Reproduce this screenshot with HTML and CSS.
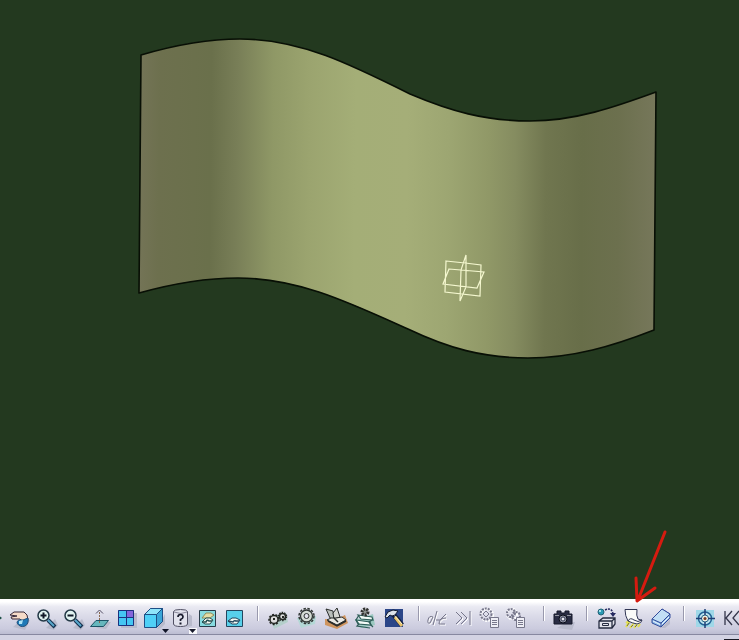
FILE: index.html
```
<!DOCTYPE html>
<html lang="en">
<head>
<meta charset="utf-8">
<meta name="viewport" content="width=device-width, initial-scale=1">
<title>Surface view</title>
<link rel="stylesheet" href="styles.css">
</head>
<body>
<main class="view">
  <svg class="scene" viewBox="0 0 739 599" preserveAspectRatio="xMidYMax meet" role="img" aria-label="Curved surface with reference planes">
    <defs>
      <linearGradient id="shade" gradientUnits="userSpaceOnUse" x1="140" y1="0" x2="656" y2="5">
        <stop offset="0" stop-color="#747457"/>
        <stop offset=".04" stop-color="#6d704e"/>
        <stop offset=".14" stop-color="#6a704b"/>
        <stop offset=".19" stop-color="#787e57"/>
        <stop offset=".26" stop-color="#8f9866"/>
        <stop offset=".33" stop-color="#9ba46f"/>
        <stop offset=".42" stop-color="#a4ae77"/>
        <stop offset=".52" stop-color="#a5ae78"/>
        <stop offset=".6" stop-color="#9da672"/>
        <stop offset=".68" stop-color="#909867"/>
        <stop offset=".73" stop-color="#858c60"/>
        <stop offset=".79" stop-color="#70764f"/>
        <stop offset=".86" stop-color="#686e49"/>
        <stop offset=".93" stop-color="#6c704e"/>
        <stop offset="1" stop-color="#76775a"/>
      </linearGradient>
    </defs>
    <path class="surface" fill="url(#shade)" d="M141 55C175 45 205 39 240 39C300 39 350 64 410 94C450 111 485 121 530 121C575 121 615 107 656 92L654 330C613 346 573 358 528 358C483 358 448 348 408 329C348 302 298 278 238 278C205 278 175 283 139 293Z"/>
    <path class="planes" d="M446 261L465 263L481 265L480 296L445 292ZM449 269L484 272L477 288L443 284ZM466 255L461 270L460 301L466 287Z"/>
    <path class="pointer" d="M665 532L638 600M636 578L637 601L655 588"/>
  </svg>
</main>
<nav class="toolbar" aria-label="View and tools">
  <div class="row">
    <div class="group">
      <button class="cut" aria-label="Fly mode"><svg viewBox="0 0 5 24"><path fill="#174c42" d="M-2 9L2 12L-2 15Z"/></svg></button>
      <button aria-label="Pan"><svg viewBox="0 0 24 24"><path class="shadow" d="M6 21L13 15L23 14L18 24Z"/><path fill="#f5dac8" stroke="#382838" d="M3 9L7 6L17 6Q21 8 21 14L18 18L13 13L5 13L4 11L10 10L3 9Z"/><path fill="#1d79b7" stroke="#255079" d="M10 17Q10 13 16 14L21 12Q22 18 18 20Q13 22 10 17Z"/><path fill="#ade3f5" d="M12 15L16 14L15 18L12 18Z"/></svg></button>
      <button aria-label="Zoom in"><svg viewBox="0 0 24 24"><path class="shadow" d="M12 22L21 13L24 19L20 24Z"/><path stroke="#14304f" stroke-width="4" d="M14 14L21 21"/><path stroke="#58a8cc" stroke-width="2" d="M14 14L20 20"/><circle cx="9.500" cy="9.500" r="5.500" fill="#e2f4f2" stroke="#243947" stroke-width="1.5"/><path stroke="#101827" stroke-width="2" d="M6.500 9.500H12.500M9.500 6.500V12.500"/></svg></button>
      <button aria-label="Zoom out"><svg viewBox="0 0 24 24"><path class="shadow" d="M12 22L21 13L24 19L20 24Z"/><path stroke="#14304f" stroke-width="4" d="M14 14L21 21"/><path stroke="#58a8cc" stroke-width="2" d="M14 14L20 20"/><circle cx="9.500" cy="9.500" r="5.500" fill="#e2f4f2" stroke="#243947" stroke-width="1.5"/><path stroke="#101827" stroke-width="2" d="M6.500 9.500H12.500"/></svg></button>
      <button aria-label="Normal view"><svg viewBox="0 0 24 24"><path class="shadow" d="M8 22L20 16H23L18 23Z"/><path fill="#66b7bd" stroke="#1c5366" d="M8 14.500H20.500L15.500 20.500H2.500Z"/><path stroke="#8a6a50" stroke-dasharray="2 1" d="M11.500 17V5"/><path stroke="#514c63" d="M8 7.500L11.500 4L15 7.500"/></svg></button>
      <button aria-label="Create multi-view"><svg viewBox="0 0 24 24"><path class="shadow" d="M18 7H22V22H6V20H18Z"/><path fill="#45c6f2" d="M3 4H19V20H3Z"/><path fill="#8466dc" d="M11 4H19V12H11Z"/><path stroke="#1c327f" stroke-width="1" d="M3.500 4.500H18.500V19.500H3.500ZM11.500 4V20M3 11.500H19"/></svg></button>
      <button class="menu" aria-label="Quick view" aria-haspopup="true"><svg viewBox="0 0 24 28"><path class="shadow" d="M15 23L23 8V18L19 22Z"/><path fill="#4fd0f7" stroke="#1d4f86" d="M2.500 8.500L8.500 2.500H20.500V15.500L14.500 21.500H2.500Z"/><path fill="#8fe4fa" stroke="#1d4f86" d="M2.500 8.500L8.500 2.500H20.500L14.500 8.500Z"/><path fill="#3ba6d8" stroke="#1d4f86" d="M14.500 8.500L20.500 2.500V15.500L14.500 21.500Z"/><path fill="#111528" d="M20 23H27L23.500 27Z"/></svg></button>
      <button class="menu" aria-label="View mode" aria-haspopup="true"><svg viewBox="0 0 24 28"><path class="shadow" d="M17 21L20 8L23 10V20Z"/><path fill="#f8f8fb" d="M20 22H28V28H20Z"/><path fill="#e2e2ed" stroke="#515064" d="M4.500 5.500Q5 3.500 11.500 3.500T18.500 5.500V18Q18 20.500 11.500 20.500T4.500 18Z"/><path stroke="#8b899c" d="M5 6Q12 9 18 6"/><path stroke="#17192b" stroke-width="1.700" d="M9 11Q9 8.500 11.500 8.500T14 11Q14 12.500 11.500 13.500V15"/><path fill="#17192b" d="M10.500 16.500H12.500V18.500H10.500ZM20 23H27L23.500 27Z"/></svg></button>
      <button aria-label="Hide or show"><svg viewBox="0 0 24 24"><path fill="#87dbe0" stroke="#293b49" d="M3.500 4.500H19.500V20.500H3.500Z"/><path fill="#e4dda6" stroke="#8d8e5d" d="M6 12L10 7H15L18 9L14 12Z"/><path fill="#f6f8f1" stroke="#254f50" d="M6 16L10 12H14L17 14L14 18H9Z"/><path stroke="#254f50" stroke-width="1.500" d="M6 16L10 16Q11 13 13 15L16 15"/></svg></button>
      <button aria-label="Swap visible space"><svg viewBox="0 0 24 24"><path fill="#58d0ea" stroke="#25465e" d="M3.500 4.500H19.500V20.500H3.500Z"/><path fill="#f3faf3" stroke="#25465e" d="M5 15L9 12H13L17 14L14 18H9Z"/><path stroke="#25465e" stroke-width="1.500" d="M5 15L10 16Q11 14 13 15L16 15"/></svg></button>
    </div>
    <span class="divider"></span>
    <div class="group wide">
      <button aria-label="Knowledge settings"><svg viewBox="0 0 24 24"><path fill="#b4cfcb" d="M3 11L19 7L21 16L7 23Z"/><circle cx="7" cy="13.5" r="4" fill="#ddd" stroke="#242824" stroke-width="1.5"/><circle cx="7" cy="13.5" r="5" stroke="#242824" stroke-width="1.5" stroke-dasharray="2 1.5"/><circle cx="15.500" cy="10.500" r="3" fill="#ddd" stroke="#242824" stroke-width="1.5"/><circle cx="15.5" cy="10.5" r="4" stroke="#242824" stroke-width="1.5" stroke-dasharray="1.500 1"/><path fill="#242824" d="M6 12H8V14H6ZM15 10H17V12H15Z"/></svg></button>
      <button aria-label="Settings"><svg viewBox="0 0 24 24"><path fill="#b4d8d6" d="M1 12L20 10L19 18L5 22Z"/><circle cx="10.500" cy="10" r="6" fill="#d5dcd5" stroke="#313634" stroke-width="1.3"/><circle cx="10.500" cy="10" r="7.5" stroke="#313634" stroke-width="1.5" stroke-dasharray="2.5 1.5"/><circle cx="10.500" cy="10" r="2.500" fill="#e4e4ec" stroke="#313634"/></svg></button>
      <button aria-label="Catalog"><svg viewBox="0 0 24 24"><path fill="#cf955f" d="M0 13L10 14L20 9L23 17L12 23L0 19Z"/><path fill="#b8bdb9" stroke="#292c2b" d="M1 3L8 5L9 13L5 12Z"/><path fill="#d4d5d0" stroke="#292c2b" d="M8 7L12 2L15 11L9 13Z"/><path fill="#e9e8e2" stroke="#292c2b" d="M2 14L6 12H11L17 11L21 14L12 19Z"/><path stroke="#292c2b" stroke-width="1.500" d="M3 15L12 20L21 15M9 12L13 16"/></svg></button>
      <button aria-label="Catalog settings"><svg viewBox="0 0 24 24"><path fill="#9cc9c1" d="M1 14L19 8L21 19L7 22Z"/><path fill="#f3fbf7" stroke="#2e5d58" stroke-width="1.2" d="M4 9L18 11L19 14L7 13Z"/><path fill="#f3fbf7" stroke="#2e5d58" stroke-width="1.2" d="M2 14L16 16L17 19L4 18Z"/><path stroke="#2e5d58" stroke-width="1.2" d="M5 9L2 14L5 18L3 20L16 22M18 14L15 16L17 19L19 21"/><circle cx="11" cy="6" r="3" fill="#8d918e" stroke="#30312e" stroke-width="3" stroke-dasharray="2 1"/></svg></button>
      <button aria-label="Tools"><svg viewBox="0 0 24 24"><path fill="#2b4688" d="M2 3H20V21H2Z"/><path stroke="#101d44" stroke-width="5" d="M10 8L19 19"/><path stroke="#e9c46b" stroke-width="3" d="M12 11L19 20"/><path stroke="#f8f2cd" d="M10 8L19 18"/><path fill="#dce2ea" stroke="#121b31" d="M2 11L5 6L10 4L15 5L12 9L9 10L7 9L4 12Z"/></svg></button>
    </div>
    <span class="divider"></span>
    <div class="group compact">
      <button class="off" aria-label="Update"><svg viewBox="0 0 24 24"><path class="light" d="M3 15Q4 10 8 12L5 18Q2 19 3 15M12 6L8 20M14 15L21 9M21 13Q14 13 14 19H20"/><path class="dim" d="M2 14Q3 9 7 11L4 17Q1 18 2 14M11 5L7 19M10 14H14L20 8M20 12Q13 12 13 18H19"/></svg></button>
      <button class="off" aria-label="Run to end"><svg viewBox="0 0 24 24"><path class="light" d="M5 7L11 13L5 19M10 7L16 13L10 19M19 6V20"/><path class="dim" d="M4 6L10 12L4 18M9 6L15 12L9 18M18 5V19"/></svg></button>
      <button class="off" aria-label="Element properties"><svg viewBox="0 0 24 24"><circle class="light dash" cx="9" cy="9" r="6"/><circle class="dim dash" cx="8" cy="8" r="5.500"/><path class="dim" d="M5 8L8 5L11 8L8 11Z"/><path fill="#eeeef5" stroke="#77778b" d="M12.500 11.500H20.500V21.500H12.500Z"/><path class="dim" d="M14 14.500H19M14 16.500H19M14 18.500H19"/></svg></button>
      <button class="off" aria-label="Group properties"><svg viewBox="0 0 24 24"><circle class="light dash" cx="8" cy="8" r="5"/><circle class="dim dash" cx="7" cy="7" r="4"/><circle class="dim dash" cx="12" cy="10" r="4"/><path fill="#eeeef5" stroke="#77778b" d="M12.500 11.500H20.500V21.500H12.500Z"/><path class="dim" d="M14 14.500H19M14 16.500H19M14 18.500H19"/></svg></button>
    </div>
    <span class="divider"></span>
    <div class="group">
      <button aria-label="Capture"><svg viewBox="0 0 24 24"><path class="shadow" d="M5 22L12 18L23 16L20 24Z"/><path fill="#292c43" stroke="#17182b" d="M2 8H5V5H9V7H13V5H17V8H20V18H2Z"/><path stroke="#92959e" d="M3 9.500H7M15 9.500H19"/><circle cx="11" cy="13" r="4" fill="#9094a5" stroke="#090c18"/><circle cx="11" cy="13" r="2" fill="#eceef3" stroke="#34384f"/></svg></button>
    </div>
    <span class="divider"></span>
    <div class="group">
      <button aria-label="Apply material"><svg viewBox="0 0 24 24"><circle cx="6" cy="6" r="3" fill="#2b9bb4" stroke="#236277"/><path fill="#a4e3ed" d="M4 4H6V6H4Z"/><path stroke="#252a60" stroke-width="1.500" stroke-dasharray="2 1" d="M10 4Q17 1 18 8"/><path fill="#252a60" d="M15 7H21L18 11Z"/><path fill="#e1e2eb" stroke="#252b40" stroke-width="1.3" d="M4 15L8 12H20V18L17 22H4ZM4 15H17M17 22V15L20 12"/><path stroke="#252b40" d="M7.500 17.500H13.500V19.500H7.500Z"/></svg></button>
      <button aria-label="Surface analysis"><svg viewBox="0 0 24 24"><path stroke="#e3df50" stroke-width="2" d="M4 21L8 15M8 22L12 17M12 22L15 18M16 21L18 18M4 17L8 14"/><path stroke="#777a35" d="M5 20L7 17M9 21L11 19M13 21L15 19"/><path fill="#f9faf8" stroke="#303654" d="M3 3.500H15Q14 10 16 13Q18 14 20 14Q20 17 15 18Q10 17 6 15Q3 10 3 3.500Z"/><path stroke="#303654" d="M6 15Q8 11 12 14T20 14"/></svg></button>
      <button aria-label="Thick surface"><svg viewBox="0 0 24 24"><path class="shadow" d="M12 22L21 13V18L16 22Z"/><path fill="#8dbde8" stroke="#344c9b" d="M3 13L13 3L21 8V12L12 21L3 17Z"/><path fill="#c2dff5" stroke="#344c9b" d="M3 13L13 3L21 8L12 17Z"/><path stroke="#f2f7ff" d="M4 15L12 19L20 11"/><path stroke="#344c9b" d="M12 17V21"/></svg></button>
    </div>
    <span class="divider"></span>
    <div class="group">
      <button aria-label="Center"><svg viewBox="0 0 24 24"><path fill="#9fd8e8" d="M4 4H22V21H4Z"/><circle cx="13" cy="12.500" r="6.500" fill="#bfe6f1" stroke="#246496" stroke-width="1.5"/><circle cx="13" cy="12.500" r="3.500" fill="#f0ecdf" stroke="#246486"/><path stroke="#203f76" stroke-width="1.5" d="M4 12.500H10M16 12.500H23M13 3V9M13 16V22"/><circle cx="13" cy="12.500" r="1.500" fill="#713c28"/></svg></button>
      <button aria-label="Previous tools"><svg viewBox="0 0 24 24"><path stroke="#35364b" stroke-width="1.300" d="M6 5V19M13 5L7 12L13 19M20 5L14 12L20 19"/></svg></button>
    </div>
  </div>
  <div class="status"><span></span></div>
</nav>
</body>
</html>
```
FILE: styles.css
```
* {
  box-sizing: border-box;
}

body {
  margin: 0;
  min-height: 100vh;
  display: flex;
  flex-direction: column;
  background: #23391f;
  font-family: "Liberation Sans", Arial, sans-serif;
  overflow: hidden;
}

.view {
  flex: 1;
  display: flex;
  position: relative;
  z-index: 1;
}

.scene {
  display: block;
  width: 100%;
  overflow: visible;
  pointer-events: none;
}

.surface {
  stroke: #080f05;
  stroke-width: 1.6;
  stroke-linejoin: round;
}

.planes {
  fill: none;
  stroke: #f4f7cf;
  stroke-width: 1.2;
}

.pointer {
  fill: none;
  stroke: #d51b10;
  stroke-width: 3;
  stroke-linecap: round;
  stroke-linejoin: round;
}

.toolbar {
  background: #d3d3e3;
  overflow: hidden;
}

.row {
  display: flex;
  align-items: flex-start;
  padding: 7px 0 4px;
  border-bottom: 1px solid #8788a0;
  background: linear-gradient(#fff 0, #fff 8%, #e9e9f2 22%, #dadae8 50%, #cbcbde 85%, #bcbdd2 100%);
}

.group {
  display: flex;
  flex: none;
}

button {
  flex: none;
  width: 27px;
  height: 24px;
  padding: 0;
  border: 0;
  background: none;
  display: flex;
  justify-content: center;
}

button svg {
  width: 24px;
  height: 24px;
  flex: none;
  fill: none;
  overflow: visible;
}

button.cut,
.cut svg {
  width: 5px;
}

.menu svg {
  height: 28px;
}

.wide button {
  width: 29px;
}

.compact {
  padding-right: 5px;
}

.compact button {
  width: 26px;
}

.divider {
  flex: none;
  width: 2px;
  height: 15px;
  margin: 0 5px 0 9px;
  border-left: 1px solid #9999ad;
  border-right: 1px solid #fff;
}

.shadow {
  fill: #b9bbcc;
}

.light {
  stroke: #fff;
  stroke-width: 1;
}

.dim {
  stroke: #77778b;
  stroke-width: 1;
}

.dash {
  stroke-width: 2;
  stroke-dasharray: 2 1;
}

.status {
  display: flex;
  align-items: flex-end;
  justify-content: flex-end;
  height: 5px;
}

.status span {
  width: 15px;
  height: 1px;
  background: #171824;
}
```
